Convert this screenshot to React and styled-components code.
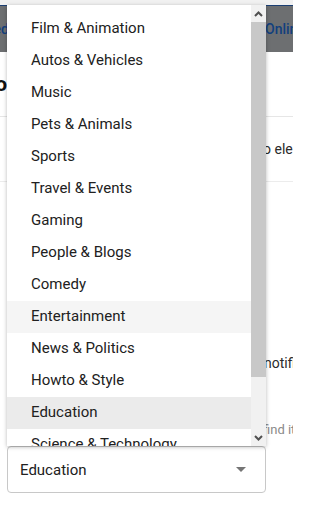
import React from "react";
import styled, { createGlobalStyle } from "styled-components";

const GlobalStyle = createGlobalStyle`
  html, body {
    margin: 0;
    padding: 0;
    background: #ffffff;
  }
  body {
    font-family: Roboto, "Liberation Sans", sans-serif;
  }
`;

const categories = [
  "Film & Animation",
  "Autos & Vehicles",
  "Music",
  "Pets & Animals",
  "Sports",
  "Travel & Events",
  "Gaming",
  "People & Blogs",
  "Comedy",
  "Entertainment",
  "News & Politics",
  "Howto & Style",
  "Education",
  "Science & Technology",
];

//css section
const Page = styled.div`
  position: relative;
  width: 293px;
  height: 515px;
  overflow: hidden;
  background: #ffffff;
  display: flex;
  flex-direction: column;

  & > * {
    flex-shrink: 0;
  }
`;

const TopStrip = styled.div`
  height: 5px;
  background: #f1f1f1;
`;

const Header = styled.header`
  height: 46px;
  border-top: 1px solid #1c3f73;
  background: #6d6f71;
  display: flex;
  align-items: center;
  justify-content: space-between;
  font-size: 14px;
  font-weight: 500;
  color: #123f7e;
  white-space: nowrap;
  overflow: hidden;
`;

const Crop = styled.div`
  width: ${(p) => p.$width}px;
  display: flex;
  justify-content: flex-end;
  overflow: hidden;
  white-space: nowrap;
`;

const RightText = styled.div`
  padding-left: ${(p) => p.$start}px;
  white-space: nowrap;
`;

const TitleRow = styled.div`
  height: 64px;
  display: flex;
  align-items: center;
  border-bottom: 1px solid #e6e6e6;
  font-size: 21px;
  font-weight: 700;
  color: #111111;
`;

const InfoRow = styled.div`
  height: 64px;
  display: flex;
  align-items: center;
  border-bottom: 1px solid #ececec;
  font-size: 14px;
  color: #2b2b2b;
  overflow: hidden;
`;

const Body = styled.div`
  display: flex;
  flex-direction: column;
  padding: 0 27px 0 7px;
`;

const Line = styled.div`
  height: ${(p) => p.$h}px;
  flex-shrink: 0;
  display: flex;
  align-items: center;
  margin-right: -27px;
  font-size: ${(p) => p.$size}px;
  color: ${(p) => p.$color};
  overflow: hidden;
`;

const SelectBox = styled.div`
  height: 45px;
  flex-shrink: 0;
  border: 1px solid #c8c8c8;
  border-radius: 4px;
  display: flex;
  align-items: center;
  justify-content: space-between;
  padding: 0 19px 0 12px;
  font-size: 15px;
  color: #212121;
`;

const Caret = styled.span`
  width: 0;
  height: 0;
  border-left: 5px solid transparent;
  border-right: 5px solid transparent;
  border-top: 5px solid #757575;
`;

const Menu = styled.div`
  position: absolute;
  left: 7px;
  top: 5px;
  width: 259px;
  height: 441px;
  display: flex;
  background: #ffffff;
  box-shadow: 0 1px 4px rgba(0, 0, 0, 0.28);
`;

const List = styled.ul`
  flex: 1;
  margin: 0;
  padding: 8px 0 0;
  list-style: none;
  overflow: hidden;
`;

const Item = styled.li`
  height: 32px;
  box-sizing: border-box;
  padding: 0 0 2px 24px;
  display: flex;
  align-items: center;
  font-size: 15px;
  color: #212121;
  white-space: nowrap;
  background: ${(p) =>
    p.$selected ? "#ebebeb" : p.$hovered ? "#f5f5f5" : "transparent"};
`;

const Scrollbar = styled.div`
  width: 15px;
  display: flex;
  flex-direction: column;
  background: #f1f1f1;
`;

const ScrollButton = styled.div`
  height: ${(p) => p.$h}px;
  display: flex;
  align-items: center;
  justify-content: center;
`;

const Thumb = styled.div`
  height: 355px;
  background: #c8c8c8;
`;

const Track = styled.div`
  flex: 1;
`;

const Chevron = ({ up }) => (
  <svg width="9" height="6" viewBox="0 0 9 6">
    <path
      d={up ? "M1 5 L4.5 1.5 L8 5" : "M1 1 L4.5 4.5 L8 1"}
      fill="none"
      stroke="#505050"
      strokeWidth="2"
    />
  </svg>
);

const App = () => {
  const selected = "Education";
  const hovered = "Entertainment";

  return (
    <>
      <GlobalStyle />
      <Page>
        <TopStrip />
        <Header>
          <Crop $width={9}>Published</Crop>
          <RightText $start={0} style={{ width: 28 }}>
            Online
          </RightText>
        </Header>
        <TitleRow>
          <Crop $width={7}>Info</Crop>
        </TitleRow>
        <InfoRow>
          <RightText $start={263}>o elements</RightText>
        </InfoRow>
        <Body>
          <Line $h={164} />
          <Line $h={34} $size={14} $color="#2b2b2b">
            <RightText $start={257}>notifications</RightText>
          </Line>
          <Line $h={32} />
          <Line $h={34} $size={13} $color="#8a8a8a">
            <RightText $start={256}>find it</RightText>
          </Line>
          <SelectBox>
            {selected}
            <Caret />
          </SelectBox>
        </Body>
        <Menu>
          <List>
            {categories.map((c) => (
              <Item key={c} $selected={c === selected} $hovered={c === hovered}>
                {c}
              </Item>
            ))}
          </List>
          <Scrollbar>
            <ScrollButton $h={17}>
              <Chevron up />
            </ScrollButton>
            <Thumb />
            <Track />
            <ScrollButton $h={16}>
              <Chevron />
            </ScrollButton>
          </Scrollbar>
        </Menu>
      </Page>
    </>
  );
};

export default App;
